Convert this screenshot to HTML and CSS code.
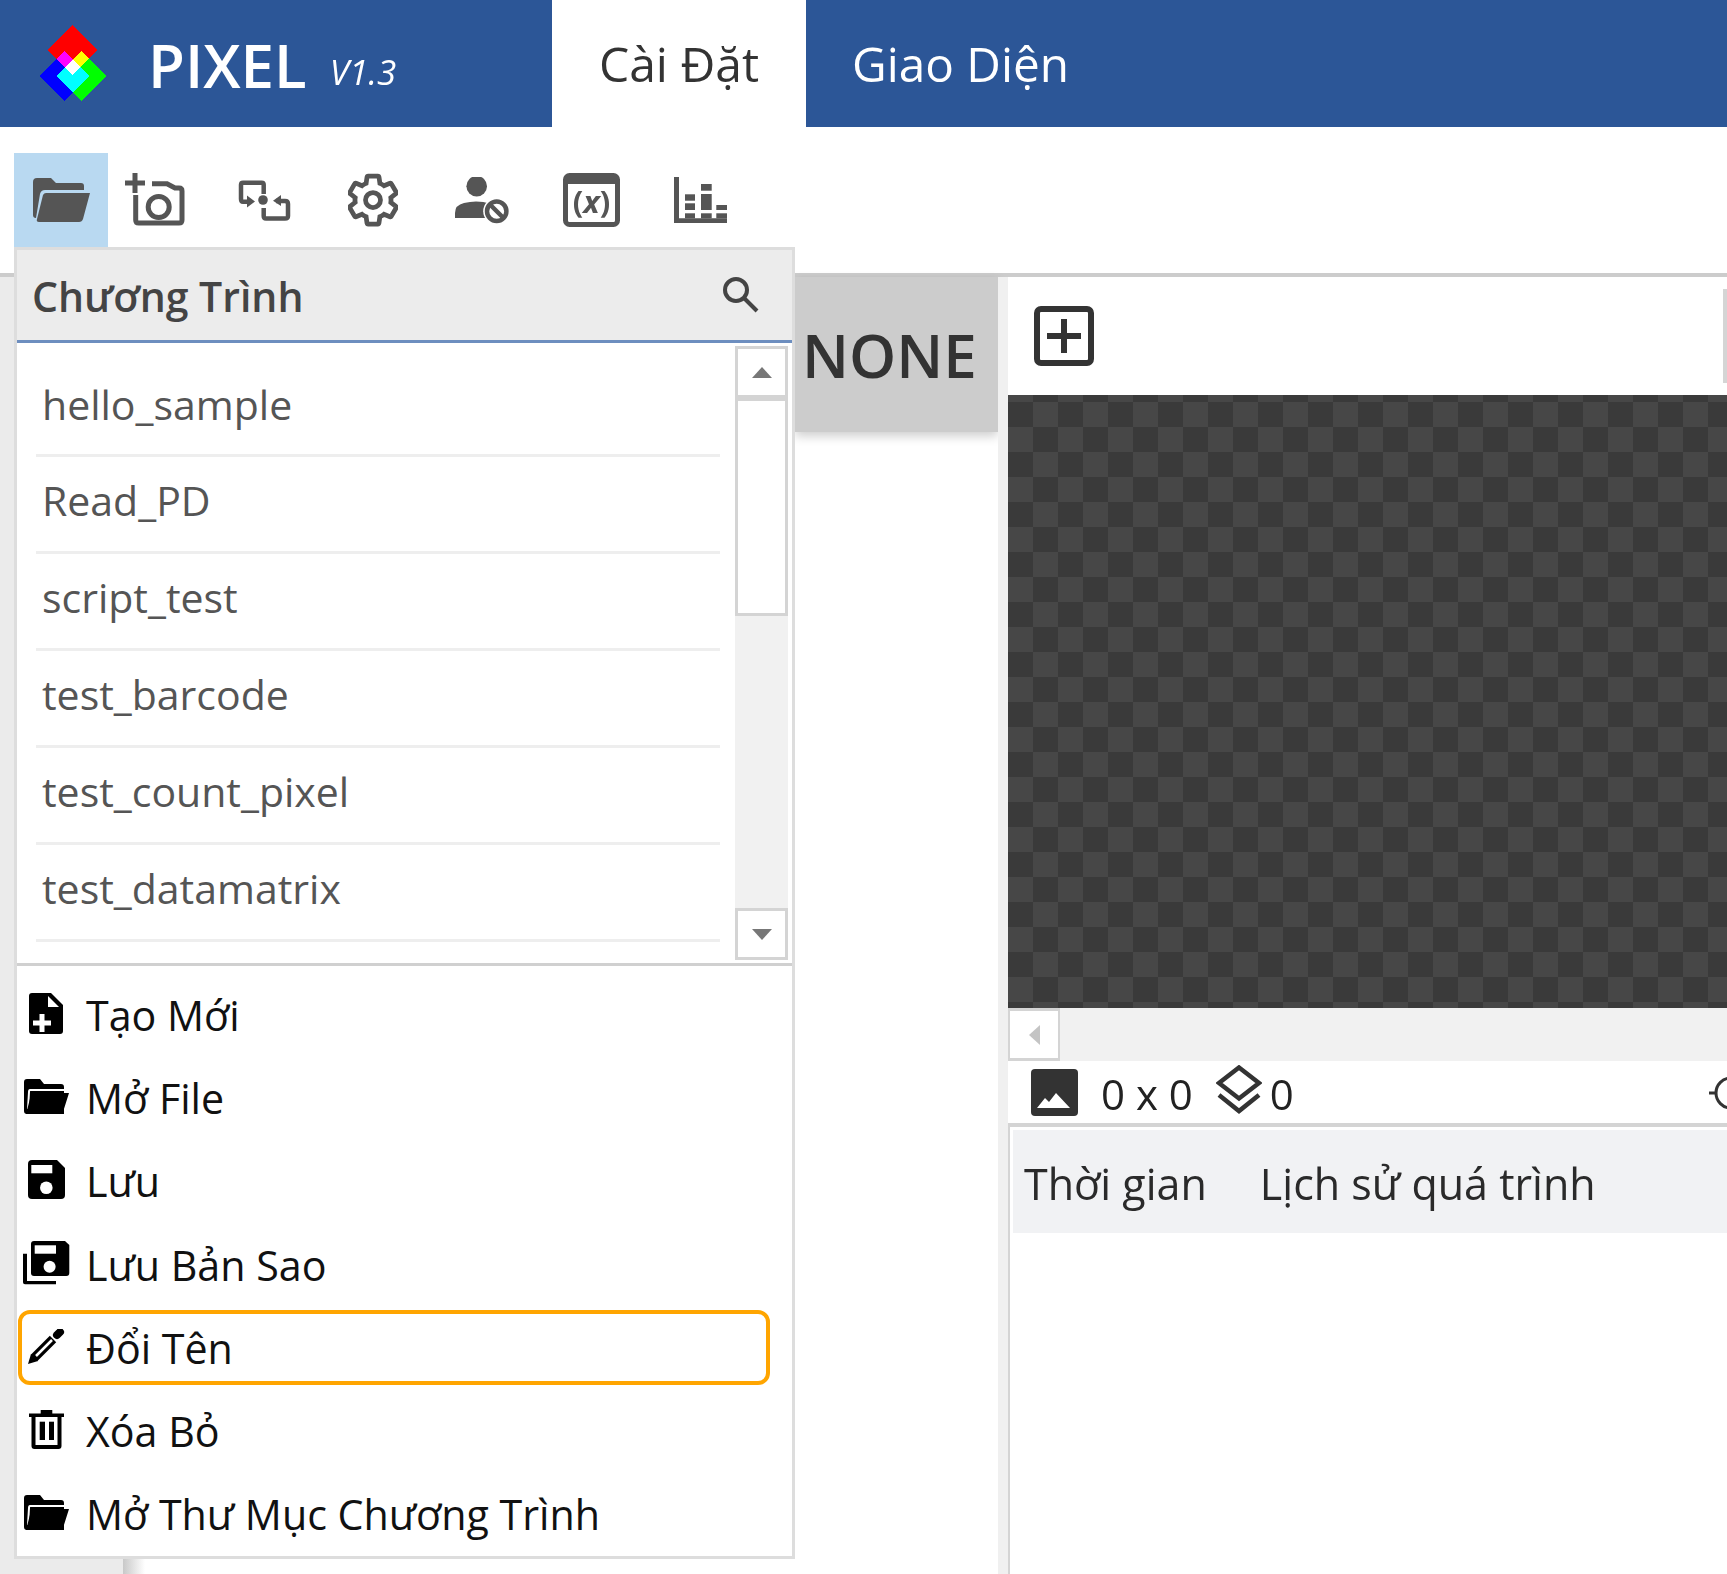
FILE: index.html
```html
<!DOCTYPE html>
<html lang="vi">
<head>
  <meta charset="utf-8">
  <title>PIXEL</title>
  <link rel="stylesheet" href="styles.css">
</head>
<body>
  <!-- Top bar -->
  <header class="topbar">
    <div class="brand">
      <svg class="logo" viewBox="0 0 70 76">
        <g class="logo-group">
          <polygon class="logo-red" points="33,0 58,25 33,50 8,25"/>
          <polygon class="logo-blue" points="25,26 50,51 25,76 0,51"/>
          <polygon class="logo-green" points="42,26 67,51 42,76 17,51"/>
        </g>
      </svg>
      <span class="brand-name">PIXEL</span>
      <span class="brand-version">V1.3</span>
    </div>
    <div class="tab tab-active">Cài Đặt</div>
    <div class="tab">Giao Diện</div>
  </header>

  <!-- Toolbar -->
  <nav class="toolbar">
    <div class="tool tool-active">
      <svg class="ico-folder" viewBox="0 0 57 44"><path d="M0 4a4 4 0 0 1 4-4h14l5 5h25a3 3 0 0 1 3 3v4H12q-4 0-5 4L3 40Q0 40 0 37z"/><path d="M13 15h44l-7 26q-1 3-4 3H6q-3 0-2-3l6-24q1-2 3-2z"/></svg>
    </div>
    <div class="tool">
      <svg class="ico-camera" viewBox="0 0 61 57"><g class="line"><path d="M10 1v20M0 11h20"/><path d="M10.700 23v25q0 3 3 3H54q3 0 3-3V19q0-3-3-3h-4l-8-4.300H27"/><circle cx="33.700" cy="35" r="10.500"/></g></svg>
    </div>
    <div class="tool">
      <svg class="ico-switch" viewBox="0 0 53 41"><g class="line-mid"><path d="M25.700 14V4.700q0-2-2-2H5q-2 0-2 2V19q0 2.700 2 2.700h5"/><path d="M38 21h9q3 0 3 3v12q0 2.500-3 2.500H28q-2.300 0-2.300-2.500v-8"/></g><path d="M9 15.500l8 6-8 6zM43 15l-8 5.700 8 5.300z"/><circle cx="25" cy="20" r="4.800"/></svg>
    </div>
    <div class="tool">
      <svg class="ico-gear" viewBox="2 1.500 20 21"><path class="line-thin" d="M19.140 12.940c.04-.3.06-.61.06-.94 0-.32-.02-.64-.07-.94l2.030-1.580c.18-.14.23-.41.12-.61l-1.920-3.320c-.12-.22-.37-.29-.59-.22l-2.390.96c-.5-.38-1.030-.7-1.620-.94l-.36-2.540c-.04-.24-.24-.41-.48-.41h-3.840c-.24 0-.43.17-.47.41l-.36 2.540c-.59.24-1.130.57-1.620.94l-2.390-.96c-.22-.08-.47 0-.59.22L2.740 8.870c-.12.21-.08.47.12.61l2.030 1.580c-.05.3-.09.63-.09.94s.02.64.07.94l-2.030 1.580c-.18.14-.23.41-.12.61l1.920 3.320c.12.22.37.29.59.22l2.390-.96c.5.38 1.030.7 1.620.94l.36 2.540c.05.24.24.41.48.41h3.840c.24 0 .44-.17.47-.41l.36-2.540c.59-.24 1.130-.56 1.620-.94l2.390.96c.22.08.47 0 .59-.22l1.920-3.320c.12-.22.07-.47-.12-.61l-2.010-1.580z"/><circle class="line-thin" cx="12" cy="12" r="3"/></svg>
    </div>
    <div class="tool">
      <svg class="ico-user" viewBox="0 0 54 47"><circle cx="21.700" cy="9.300" r="10.300"/><path d="M0 41v-5q0-8 9-10 6-1.500 12-1.500 8 0 13 2v14.500z"/><circle class="halo" cx="41.700" cy="34.300" r="13.500"/><g class="line-mid"><circle cx="41.700" cy="34.300" r="9.700"/><path d="M35 27.500l13.500 13.500"/></g></svg>
    </div>
    <div class="tool">
      <svg class="ico-var" viewBox="0 0 57 54"><rect class="line-frame" x="2.500" y="2.500" width="52" height="49" rx="4"/><rect x="2" y="2" width="53" height="9"/><text class="var-text" x="28.500" y="40" text-anchor="middle">(<tspan class="var-x">x</tspan>)</text></svg>
    </div>
    <div class="tool">
      <svg class="ico-chart" viewBox="0 0 53 46"><path d="M0 0h5v41.300h48V46H0z"/><rect x="11" y="17.300" width="10" height="6.400"/><rect x="11" y="26.300" width="10" height="6.700"/><rect x="11" y="36.300" width="10" height="5"/><rect x="27" y="7" width="10.700" height="6.700"/><rect x="27" y="17" width="10.700" height="16"/><rect x="27" y="36.300" width="10.700" height="5"/><rect x="42.300" y="28" width="10.700" height="5"/><rect x="42.300" y="36.300" width="10.700" height="5"/></svg>
    </div>
  </nav>

  <main class="workspace">
    <section class="left-pane">
      <div class="sidebar"></div>
      <div class="none-box">NONE</div>
    </section>

    <section class="right-pane">
      <div class="view-tools">
        <svg class="ico-add" viewBox="0 0 60 60"><rect class="line-add" x="3" y="3" width="54" height="54" rx="4"/><path class="line-add" d="M13 30h34M30 13v34"/></svg>
        <div class="view-scroll"></div>
      </div>
      <div class="canvas"></div>
      <div class="hscroll"><div class="hscroll-btn"><span class="arrow-left"></span></div></div>
      <div class="status">
        <svg class="ico-image" viewBox="0 0 47 47"><rect width="47" height="47" rx="4"/><path class="cut" d="M6 39l8-10 4 4 7-9 14 15z"/></svg>
        <span class="status-size">0 x 0</span>
        <svg class="ico-layers" viewBox="0 0 46 49"><g class="line-mid"><path d="M23 2.500L43 18 23 33.500 3 18z"/><path d="M3 30l20 16 20-16"/></g></svg>
        <span class="status-count">0</span>
        <svg class="ico-cross" viewBox="0 0 30 44"><g class="line-cross"><circle cx="22" cy="22" r="15"/><path d="M0 22h7"/></g></svg>
      </div>
      <div class="log">
        <div class="log-head"><span class="log-time">Thời gian</span><span>Lịch sử quá trình</span></div>
      </div>
    </section>
  </main>

  <!-- Program dropdown -->
  <div class="panel">
    <div class="panel-head">
      <span>Chương Trình</span>
      <svg class="ico-search" viewBox="0 0 37 37"><circle cx="14" cy="14" r="11"/><path d="M22 22l13 13"/></svg>
    </div>
    <div class="list-wrap">
      <ul class="list">
        <li>hello_sample</li>
        <li>Read_PD</li>
        <li>script_test</li>
        <li>test_barcode</li>
        <li>test_count_pixel</li>
        <li>test_datamatrix</li>
      </ul>
      <div class="vscroll">
        <div class="vscroll-btn"><span class="arrow-up"></span></div>
        <div class="vscroll-thumb"></div>
        <div class="vscroll-track"></div>
        <div class="vscroll-btn"><span class="arrow-down"></span></div>
      </div>
    </div>
    <div class="menu">
      <div class="menu-item">
        <span class="menu-icon"><svg class="m-new" viewBox="0 0 34 41"><path d="M3 0h19l12 12v26q0 3-3 3H3q-3 0-3-3V3q0-3 3-3z"/><path class="cut" d="M19 3v11h11z"/><path class="cut-line" d="M4 30h18M13 21v18"/></svg></span>
        Tạo Mới
      </div>
      <div class="menu-item">
        <span class="menu-icon"><svg class="m-folder" viewBox="0 0 45 35"><path d="M0 3q0-3 3-3h13l4 5h17q3 0 3 3v27H3q-3 0-3-3z"/><path class="cut-sliver" d="M41 11H6q-1 0-1 2L4 30"/><path d="M9 14h36l-6 19q-.5 2-3 2H2l5-19q.5-2 2-2z"/></svg></span>
        Mở File
      </div>
      <div class="menu-item">
        <span class="menu-icon"><svg class="m-save" viewBox="0 0 37 39"><path d="M4 0h25l8 8v27q0 4-4 4H4q-4 0-4-4V4q0-4 4-4z"/><rect class="cut" x="3.300" y="5" width="21" height="8.300"/><circle class="cut" cx="18.300" cy="27.700" r="6.300"/></svg></span>
        Lưu
      </div>
      <div class="menu-item">
        <span class="menu-icon"><svg class="m-savecopy" viewBox="0 0 47 44"><path d="M0 12.700h4V40h29v3.300H2q-2 0-2-2z"/><path d="M11 0h31l4.300 4v28q0 3-3 3H11q-3 0-3-3V3q0-3 3-3z"/><rect class="cut" x="11.700" y="4.300" width="21.300" height="8.400"/><circle class="cut" cx="26.600" cy="25.700" r="6"/></svg></span>
        Lưu Bản Sao
      </div>
      <div class="menu-item menu-focus">
        <span class="menu-icon"><svg class="m-pencil" viewBox="0 0 37 35"><path class="pen-body" d="M6 29L25 10"/><path class="pen-core" d="M8 27L24 11"/><path d="M0 35l3-10 7 7z"/><path class="pen-cap" d="M29 6l3-3"/></svg></span>
        Đổi Tên
      </div>
      <div class="menu-item">
        <span class="menu-icon"><svg class="m-trash" viewBox="0 0 35 39"><path d="M11.700 0h11.600v3.500H35V7H0V3.500h11.700z"/><path d="M2.500 7h4v28h22V7h4v29q0 3-3 3h-24q-3 0-3-3z"/><rect x="10.700" y="11.700" width="5.300" height="18.300"/><rect x="20" y="11.700" width="5" height="18.300"/></svg></span>
        Xóa Bỏ
      </div>
      <div class="menu-item">
        <span class="menu-icon"><svg class="m-folder" viewBox="0 0 45 35"><path d="M0 3q0-3 3-3h13l4 5h17q3 0 3 3v27H3q-3 0-3-3z"/><path class="cut-sliver" d="M41 11H6q-1 0-1 2L4 30"/><path d="M9 14h36l-6 19q-.5 2-3 2H2l5-19q.5-2 2-2z"/></svg></span>
        Mở Thư Mục Chương Trình
      </div>
    </div>
  </div>
</body>
</html>
```

FILE: styles.css
```css
/* General Reset */
body, ul, li {
  margin: 0;
  padding: 0;
}

* {
  box-sizing: border-box;
}

body {
  width: 1727px;
  height: 1574px;
  overflow: hidden;
  position: relative;
  font-family: "Open Sans", "Noto Sans", sans-serif;
  background: #fff;
  color: #333;
}

svg {
  display: block;
  fill: currentColor;
}

/* Top bar */
.topbar {
  display: flex;
  height: 127px;
  background: #2c5697;
  color: #fff;
}

.brand {
  width: 552px;
  display: flex;
  align-items: center;
  padding-left: 39px;
}

.logo {
  width: 70px;
  height: 76px;
  margin-top: -2px;
  shape-rendering: crispEdges;
}

.logo-group {
  isolation: isolate;
}

.logo-group polygon {
  mix-blend-mode: screen;
}

.logo-red { fill: #f00; }
.logo-blue { fill: #00f; }
.logo-green { fill: #0f0; }

.brand-name {
  margin-left: 39px;
  margin-top: 2px;
  font-size: 60px;
  font-weight: 600;
}

.brand-version {
  margin-left: 23px;
  margin-top: 16px;
  font-size: 35px;
  font-style: italic;
}

.tab {
  width: 254px;
  height: 127px;
  display: flex;
  align-items: center;
  justify-content: center;
  font-size: 48px;
}

.tab-active {
  background: #fff;
  color: #333;
}

.tab + .tab {
  margin-left: 46px;
  justify-content: flex-start;
  font-size: 47.700px;
}

/* Toolbar */
.toolbar {
  height: 146px;
  display: flex;
  align-items: flex-start;
  padding: 26px 0 0 14px;
  color: #555;
}

.tool {
  width: 94px;
  height: 94px;
  margin-right: 15px;
  display: flex;
  align-items: center;
  justify-content: center;
}

.tool-active {
  background: #b9d9f1;
  margin-right: 0;
}

.ico-folder { width: 57px; height: 44px; }
.ico-camera { width: 61px; height: 57px; }
.ico-switch { width: 53px; height: 41px; }
.ico-gear { width: 50px; height: 54px; }
.ico-user { width: 54px; height: 47px; }
.ico-var { width: 57px; height: 54px; }
.ico-chart { width: 53px; height: 46px; }

.line path, .line circle {
  fill: none;
  stroke: currentColor;
  stroke-width: 5;
}

.line-thin {
  fill: none;
  stroke: currentColor;
  stroke-width: 1.900;
}

.line-mid path, .line-mid circle {
  fill: none;
  stroke: currentColor;
  stroke-width: 4.500;
}

.line-frame {
  fill: none;
  stroke: currentColor;
  stroke-width: 5;
}

.line-cross path, .line-cross circle {
  fill: none;
  stroke: currentColor;
  stroke-width: 3;
}

.halo {
  fill: #fff;
}

.var-text {
  font-family: "Open Sans", sans-serif;
  font-weight: 700;
  font-size: 31px;
}

.var-x {
  font-style: italic;
}

/* Workspace */
.workspace {
  height: 1301px;
  display: flex;
  border-top: 4px solid #ccc;
}

.left-pane {
  width: 998px;
  display: flex;
  justify-content: space-between;
  align-items: flex-start;
}

.sidebar {
  width: 145px;
  height: 100%;
  background: linear-gradient(to right, #ebebeb 123px, #c8c8c8 123px, #fff 145px);
}

.none-box {
  width: 203px;
  height: 155px;
  display: flex;
  align-items: center;
  padding-left: 7px;
  background: #ccc;
  box-shadow: 0 4px 10px rgba(0, 0, 0, 0.2);
  font-size: 60px;
  font-weight: 600;
  color: #333;
}

.right-pane {
  width: 729px;
  border-left: 10px solid #f0f0f0;
  display: flex;
  flex-direction: column;
}

.view-tools {
  height: 118px;
  display: flex;
  justify-content: space-between;
  padding: 29px 0 0 26px;
  color: #333;
}

.ico-add { width: 60px; height: 60px; }

.line-add {
  fill: none;
  stroke: #333;
  stroke-width: 6;
}

.view-scroll {
  width: 4px;
  height: 94px;
  margin-top: -17px;
  background: #d5d5d5;
}

/* Checkerboard canvas */
.canvas {
  height: 613px;
  background-color: #474747;
  background-image: conic-gradient(#3a3a3a 25%, #474747 0 50%, #3a3a3a 0 75%, #474747 0);
  background-size: 50px 50px;
  background-position: 0 -18px;
}

.hscroll {
  height: 53px;
  background: #f1f1f1;
}

.hscroll-btn {
  width: 52px;
  height: 53px;
  background: #fff;
  border: 2px solid #d4d4d4;
  border-top-width: 3px;
  border-bottom-width: 3px;
  display: flex;
  align-items: center;
  justify-content: center;
}

.arrow-left {
  border-top: 10px solid transparent;
  border-bottom: 10px solid transparent;
  border-right: 11px solid #c4c4c4;
}

.status {
  height: 62px;
  display: flex;
  align-items: center;
  font-size: 42px;
  color: #222;
  position: relative;
}

.status span {
  margin-top: 2px;
}

.ico-image { width: 47px; height: 47px; margin-left: 23px; color: #333; }
.ico-layers { width: 46px; height: 49px; margin-left: 23px; margin-top: -6px; color: #333; }
.ico-cross { width: 30px; height: 44px; position: absolute; right: -12px; top: 10px; color: #333; }

.cut {
  fill: #fff;
}

.cut-line {
  fill: none;
  stroke: #fff;
  stroke-width: 5;
}

.cut-sliver {
  fill: none;
  stroke: #fff;
  stroke-width: 2;
}

.status-size { margin-left: 23px; }
.status-count { margin-left: 8px; }

.log {
  flex: 1;
  border-top: 4px solid #d4d4d4;
  border-left: 2px solid #d4d4d4;
  padding: 3px 0 0 3px;
}

.log-head {
  height: 103px;
  background: #f1f2f4;
  display: flex;
  align-items: center;
  padding: 4px 0 0 11px;
  font-size: 43px;
  color: #2a2a2a;
}

.log-time {
  margin-right: 53px;
}

/* Program dropdown */
.panel {
  position: absolute;
  left: 14px;
  top: 247px;
  width: 781px;
  height: 1312px;
  background: #fff;
  border: 3px solid #ddd;
  display: flex;
  flex-direction: column;
}

.panel-head {
  height: 93px;
  flex: none;
  background: #ececec;
  border-bottom: 3px solid #6d8ebf;
  display: flex;
  align-items: center;
  justify-content: space-between;
  padding: 2px 33px 0 15px;
  font-size: 41px;
  font-weight: 600;
  color: #444;
}

.ico-search { width: 37px; height: 37px; margin-top: -3px; }

.ico-search circle, .ico-search path {
  fill: none;
  stroke: #444;
  stroke-width: 4;
}

.list-wrap {
  height: 623px;
  flex: none;
  display: flex;
  justify-content: space-between;
  padding: 3px 4px 3px 19px;
  border-bottom: 3px solid #d0d0d0;
}

.list {
  width: 684px;
  list-style: none;
}

.list li {
  height: 97px;
  border-bottom: 3px solid #eee;
  display: flex;
  align-items: center;
  padding: 0 0 8px 6px;
  font-size: 41px;
  color: #555;
}

.list li:first-child {
  height: 111px;
  padding-top: 7px;
  padding-bottom: 0;
}

.vscroll {
  width: 53px;
  height: 100%;
  background: #f1f1f1;
  display: flex;
  flex-direction: column;
}

.vscroll-btn {
  height: 52px;
  flex: none;
  background: #fff;
  border: 3px solid #d4d4d4;
  display: flex;
  align-items: center;
  justify-content: center;
}

.vscroll-thumb {
  height: 218px;
  flex: none;
  background: #fff;
  border: 3px solid #d4d4d4;
}

.vscroll-track {
  flex: 1;
}

.arrow-up {
  border-left: 10px solid transparent;
  border-right: 10px solid transparent;
  border-bottom: 11px solid #777;
}

.arrow-down {
  border-left: 10px solid transparent;
  border-right: 10px solid transparent;
  border-top: 11px solid #777;
}

.menu {
  flex: 1;
  padding-top: 7px;
  color: #000;
}

.menu-item {
  height: 83.300px;
  display: flex;
  align-items: center;
  font-size: 41.200px;
  color: #111;
}

.menu-icon {
  width: 58px;
  margin-right: 11px;
  margin-top: -3px;
  flex: none;
  display: flex;
  justify-content: center;
  color: #000;
}

.menu-focus {
  height: 79px;
  margin: 2.150px 20px 2.150px -1px;
  padding-left: 1px;
  outline: 4px solid #ffa500;
  outline-offset: -6px;
  border-radius: 14px;
}

.m-new { width: 34px; height: 41px; }
.m-folder { width: 45px; height: 35px; }
.m-save { width: 37px; height: 39px; }
.m-savecopy { width: 47px; height: 44px; }
.m-pencil { width: 37px; height: 35px; }
.m-trash { width: 35px; height: 39px; }

.pen-body {
  fill: none;
  stroke: #000;
  stroke-width: 9;
}

.pen-core {
  fill: none;
  stroke: #fff;
  stroke-width: 2.500;
}

.pen-cap {
  fill: none;
  stroke: #000;
  stroke-width: 8;
  stroke-linecap: round;
}
```
